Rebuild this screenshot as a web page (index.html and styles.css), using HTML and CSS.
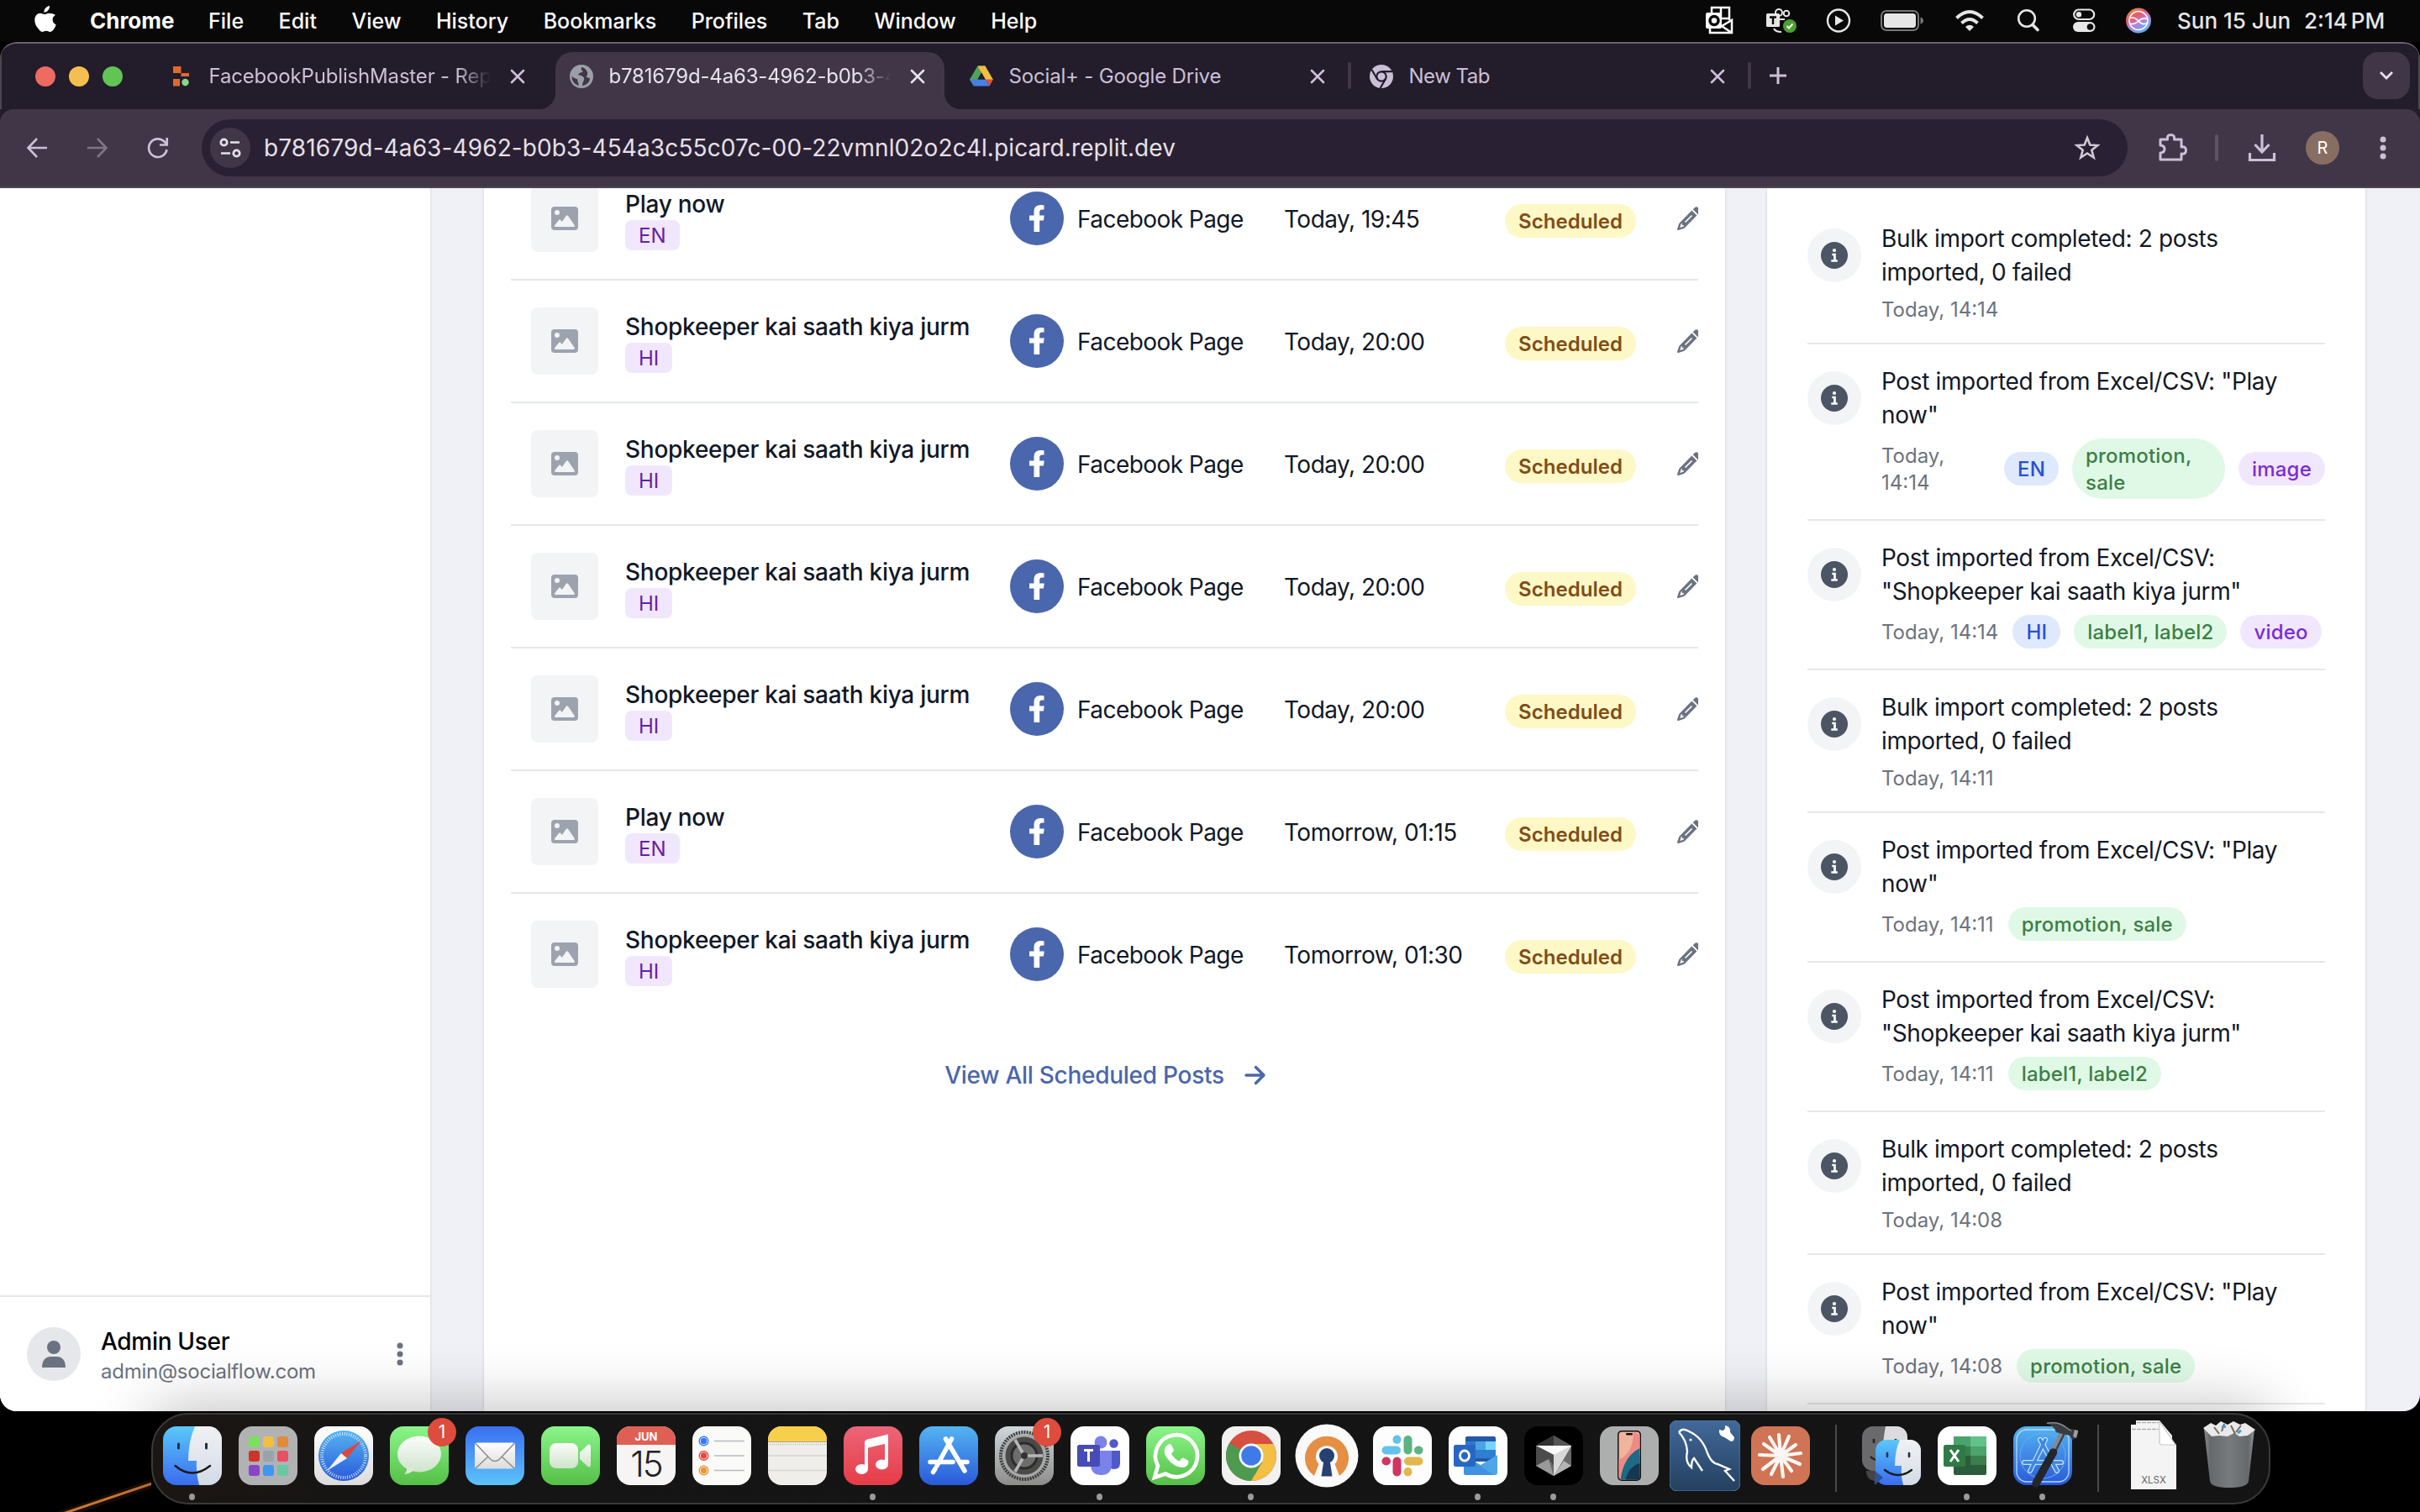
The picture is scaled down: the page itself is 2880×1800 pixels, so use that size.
FILE: index.html
```html
<!DOCTYPE html>
<html lang="en">
<head>
<meta charset="utf-8">
<title>Scheduled posts</title>
<link rel="stylesheet" href="styles.css">
</head>
<body>
<svg class="defs" aria-hidden="true">
  <defs>
    <linearGradient id="g-finder" x1="0" y1="0" x2="0" y2="1"><stop offset="0" stop-color="#5ac8fa"/><stop offset="1" stop-color="#3a6cf0"/></linearGradient>
    <linearGradient id="g-face" x1="0" y1="0" x2="0" y2="1"><stop offset="0" stop-color="#f1f1f4"/><stop offset="1" stop-color="#d3dbe6"/></linearGradient>
    <linearGradient id="g-green" x1="0" y1="0" x2="0" y2="1"><stop offset="0" stop-color="#8bf58a"/><stop offset="1" stop-color="#55bf48"/></linearGradient>
    <linearGradient id="g-mail" x1="0" y1="0" x2="0" y2="1"><stop offset="0" stop-color="#3a6ff0"/><stop offset="1" stop-color="#5cc3fa"/></linearGradient>
    <linearGradient id="g-blue" x1="0" y1="0" x2="0" y2="1"><stop offset="0" stop-color="#54b4f2"/><stop offset="1" stop-color="#2a59d9"/></linearGradient>
    <linearGradient id="g-white" x1="0" y1="0" x2="0" y2="1"><stop offset="0" stop-color="#ffffff"/><stop offset="1" stop-color="#dcdcdc"/></linearGradient>
    <linearGradient id="g-bubble" x1="0" y1="0" x2="0" y2="1"><stop offset="0" stop-color="#fbfdfa"/><stop offset="1" stop-color="#cfe3cb"/></linearGradient>
    <linearGradient id="g-music" x1="0" y1="0" x2="0" y2="1"><stop offset="0" stop-color="#ec6579"/><stop offset="1" stop-color="#e63c46"/></linearGradient>
    <linearGradient id="g-prefs" x1="0" y1="0" x2="0" y2="1"><stop offset="0" stop-color="#cfd8dd"/><stop offset="1" stop-color="#8d8d8b"/></linearGradient>
    <linearGradient id="g-sql" x1="0" y1="0" x2="0" y2="1"><stop offset="0" stop-color="#41699a"/><stop offset="1" stop-color="#24405f"/></linearGradient>
    <linearGradient id="g-trash" x1="0" y1="0" x2="1" y2="0"><stop offset="0" stop-color="#8b8f92"/><stop offset=".12" stop-color="#66696c"/><stop offset=".5" stop-color="#777b7e"/><stop offset=".88" stop-color="#66696c"/><stop offset="1" stop-color="#94989b"/></linearGradient>
    <linearGradient id="g-siri" x1="0" y1="0" x2=".6" y2="1"><stop offset="0" stop-color="#eda63f"/><stop offset=".4" stop-color="#e8596a"/><stop offset=".65" stop-color="#b583dc"/><stop offset="1" stop-color="#57b4f0"/></linearGradient>
  </defs>
  <symbol id="i-close" viewBox="0 0 24 24"><path d="M5 5l14 14M19 5L5 19" stroke="currentColor" stroke-width="2.600" fill="none" stroke-linecap="round"/></symbol>
  <symbol id="i-image" viewBox="0 0 32 28"><path fill="currentColor" fill-rule="evenodd" d="M4 0h24a4 4 0 0 1 4 4v20a4 4 0 0 1-4 4H4a4 4 0 0 1-4-4V4a4 4 0 0 1 4-4zM7 4a3 3 0 1 0 0 6a3 3 0 0 0 0-6zM17.700 11L12.800 18l-1.700-2.100q-1-1.100-2 0L4.200 22q-.8 2 1 2h21.500q1.800-.2 1-2l-7.600-11q-1.200-1.400-2.400 0z"/></symbol>
  <symbol id="i-fb" viewBox="0 0 64 64"><circle cx="32" cy="32" r="32" fill="#4a66ac"/><path fill="#fff" d="M28.500 48V34.500H23V28.500h5.500v-4.500c0-5.200 3-8 7.800-8 2.200 0 4.200.4 4.200.4v5.100h-2.300c-2.300 0-3 1.400-3 3v4h5.600l-.9 6h-4.700V48z"/></symbol>
  <symbol id="i-pencil" viewBox="0 0 28 28"><path fill="#6b7280" d="M18.700 3.300l6 6 2-2c1.300-1.300 1.300-3 0-4.300L25 1.300c-1.300-1.300-3-1.300-4.300 0zM17.400 4.600L3.200 18.900c-.6.600-1.100 1.400-1.300 2.200L.1 26.600c-.2.900.5 1.500 1.300 1.300l5.600-1.600c.9-.3 1.600-.7 2.200-1.300L23.400 10.600zM4.500 20.800l1.300-1v2.500h2.500l-1 1.500-4 1.200z"/><path d="M9.500 18.500l8-8" stroke="#fff" stroke-width="1.700"/></symbol>
  <symbol id="i-info" viewBox="0 0 64 64"><circle cx="32" cy="32" r="32" fill="#f3f4f6"/><circle cx="32" cy="32" r="16" fill="#4b5563"/><circle cx="32" cy="26" r="2.100" fill="#fff"/><path d="M29.300 31h3.200v7.500M28.300 38.500h7.500" stroke="#fff" stroke-width="2.700" fill="none"/></symbol>
  <symbol id="i-dots" viewBox="0 0 8 28"><circle cx="4" cy="4" r="3.500"/><circle cx="4" cy="14" r="3.500"/><circle cx="4" cy="24" r="3.500"/></symbol>
</svg>

<header class="menubar">
  <svg class="apple" viewBox="0 0 26 31"><path fill="#fff" d="M18 0c.3 2.200-.7 4.200-2 5.600-1.300 1.400-3 2.200-4.600 2.100-.2-2 .7-4 1.900-5.300C14.600 1 16.500.1 18 0zM25 10.700c-2.200 1.400-3.400 3.200-3.400 5.600 0 2.700 1.500 5 4.100 6.100-.6 1.900-1.500 3.700-2.700 5.400-1.200 1.700-2.500 3.100-4.400 3.100-1.800 0-2.400-1.100-4.600-1.100s-3 1.100-4.700 1.100c-1.900 0-3.200-1.500-4.400-3.300C1.400 24.100.2 19.700.3 16.500.5 11.800 3.500 8.800 7 8.800c2 0 3.700 1.300 5 1.300 1.200 0 3.100-1.400 5.600-1.400 2.300 0 5.500.9 7.400 2z"/></svg>
  <nav class="menus">
    <b>Chrome</b><span>File</span><span>Edit</span><span>View</span><span>History</span><span>Bookmarks</span><span>Profiles</span><span>Tab</span><span>Window</span><span>Help</span>
  </nav>
  <svg class="status" viewBox="2020 0 550 50">
    <g fill="none" stroke="#fff" stroke-width="2.500"><path d="M2037 16V9h21v15M2048 9v14M2037 22h21M2035 34v5h26V24l-12 7 12 8"/></g>
    <rect x="2030" y="15" width="19" height="19" rx="2" fill="#fff"/><ellipse cx="2040" cy="24.500" rx="5" ry="5" fill="none" stroke="#080808" stroke-width="3.500"/>
    <g fill="none" stroke="#e6e6e6" stroke-width="2"><circle cx="2117" cy="15" r="4"/><circle cx="2126" cy="16" r="3.300"/><path d="M2118 23h6M2111 34q2 4 9 4"/></g>
    <rect x="2102" y="16" width="16" height="16" rx="1.500" fill="#e6e6e6"/><path d="M2106 20.500h8M2110 20v9" stroke="#080808" stroke-width="2.400"/>
    <circle cx="2130" cy="31" r="8" fill="#4c9f2e"/><path d="M2126.500 31l2.500 2.500 4.500-5" fill="none" stroke="#fff" stroke-width="2"/>
    <circle cx="2188" cy="24.500" r="13" fill="none" stroke="#e6e6e6" stroke-width="2.400"/><path fill="#e6e6e6" d="M2184 18.500v12l10-6z"/>
    <rect x="2239" y="13" width="44" height="23" rx="6" fill="none" stroke="#767676" stroke-width="2"/><rect x="2242" y="16" width="38" height="17" rx="3.500" fill="#e6e6e6"/><path d="M2285.500 20.500q3.500 1 3.500 4t-3.500 4z" fill="#767676"/>
    <g fill="none" stroke="#e6e6e6" stroke-width="4"><path d="M2328.500 21.500q15.500-15 31 0M2334.500 27.500q9.500-9 19 0"/></g><path fill="#e6e6e6" d="M2339 32q5-4.500 10 0l-5 5z"/>
    <circle cx="2412" cy="22" r="9.800" fill="none" stroke="#e6e6e6" stroke-width="2.600"/><path d="M2419 29.500l6 6" stroke="#e6e6e6" stroke-width="3.600" stroke-linecap="round"/>
    <rect x="2468.200" y="11.500" width="24" height="11.500" rx="5.700" fill="none" stroke="#e6e6e6" stroke-width="2.200"/><circle cx="2474" cy="17.200" r="3.200" fill="#e6e6e6"/><rect x="2467" y="26" width="26.500" height="12" rx="6" fill="#e6e6e6"/><circle cx="2487.500" cy="32" r="3.800" fill="#080808"/>
    <circle cx="2545" cy="24.500" r="15" fill="url(#g-siri)"/><circle cx="2545" cy="24.500" r="11" fill="none" stroke="#fff" stroke-width="1.600"/><path d="M2534 22q6-3 11 3t11 2M2534 28q6 2 11-3t11-2" fill="none" stroke="#fff" stroke-width="1.500"/>
  </svg>
  <span class="clock"><span>Sun 15 Jun</span><span class="hour">2:14 PM</span></span>
</header>

<section class="window">
  <div class="tabstrip">
    <div class="lights"><i class="red"></i><i class="yellow"></i><i class="green"></i></div>
    <div class="tab">
      <svg class="fav" viewBox="0 0 28 28"><path fill="#e06a2c" d="M4 2h9.500v8H4zM13.500 10H23v4H13.500zM4 17h8v8.500H4z"/><circle cx="18.500" cy="21" r="4.200" fill="#85d98a"/></svg>
      <span class="tab-title faded">FacebookPublishMaster - Replit</span>
      <svg class="x"><use href="#i-close"/></svg>
    </div>
    <div class="tab active">
      <svg class="fav" viewBox="0 0 28 28"><circle cx="14" cy="14" r="14" fill="#9aa0a6"/><path fill="#403648" d="M14 3c-1 3 0 4 2 5-2 2-5 1-6 4 3 1 6 1 7 4s-2 4-2 9c6-1 9-5 9-9l-4-1c0-3 2-3 1-6-1-3-4-6-7-6zM2.500 13c1 3 4 3 6 4s0 3 2 5v3C5 23 2 18 2.500 13z"/></svg>
      <span class="tab-title faded">b781679d-4a63-4962-b0b3-454a</span>
      <svg class="x"><use href="#i-close"/></svg>
    </div>
    <div class="tab">
      <svg class="fav" viewBox="0 0 28 28"><path fill="#4fa35a" d="M9.500 1.500h9L5 25.500 0 17.500z"/><path fill="#f3bd42" d="M9.500 1.500h9L28 18h-9z"/><path fill="#4680ea" d="M5 25.500l4.500-8H19l4.500 8z"/><path fill="#4680ea" d="M0 17.500h10L5 25.500z"/><path fill="#dc5040" d="M19 17.500h9l-4.500 8z"/><path fill="#231c2a" d="M14 9.500l4.700 8H9.400z" opacity=".55"/></svg>
      <span class="tab-title">Social+ - Google Drive</span>
      <svg class="x"><use href="#i-close"/></svg>
    </div>
    <div class="tab lined">
      <svg class="fav" viewBox="0 0 28 28"><circle cx="14" cy="14" r="14" fill="#c9bfd6"/><circle cx="14" cy="14" r="5.700" fill="none" stroke="#231c2a" stroke-width="2.200"/><path d="M14 8.200h13M9 17L2.500 6M19 17l-6.500 11" stroke="#231c2a" stroke-width="2.200"/></svg>
      <span class="tab-title tight">New Tab</span>
      <svg class="x"><use href="#i-close"/></svg>
    </div>
    <div class="newtab lined"><svg width="22" height="22" viewBox="0 0 22 22"><path d="M11 1v20M1 11h20" stroke="#cbc0d8" stroke-width="3"/></svg></div>
    <div class="dropdown"><svg width="18" height="12" viewBox="0 0 18 12"><path d="M2 2l7 7 7-7" stroke="#e6dff0" stroke-width="2.800" fill="none"/></svg></div>
  </div>
  <div class="toolbar">
    <svg class="nav" viewBox="0 0 28 28"><path d="M26 14H4M14 3L3.500 14 14 25" stroke="#cbc0d8" stroke-width="2.600" fill="none"/></svg>
    <svg class="nav" viewBox="0 0 28 28"><path d="M2 14h22M14 3l10.500 11L14 25" stroke="#7d7486" stroke-width="2.600" fill="none"/></svg>
    <svg class="nav" viewBox="0 0 28 28"><path d="M24.500 16A10.800 10.800 0 1 1 21.500 6.500L24.500 9.500M24.700 2v8.500H16" stroke="#cbc0d8" stroke-width="2.700" fill="none"/></svg>
    <div class="omnibox">
      <div class="site"><svg width="28" height="28" viewBox="0 0 28 28"><g fill="none" stroke="#e6e0e9" stroke-width="2.700"><circle cx="6.500" cy="7.500" r="3.700"/><path d="M14 7.500h11M3 20.500h11"/><circle cx="21.500" cy="20.500" r="3.700"/></g></svg></div>
      <span class="url">b781679d-4a63-4962-b0b3-454a3c55c07c-00-22vmnl02o2c4l.picard.replit.dev</span>
      <svg class="star" viewBox="0 0 32 32"><path d="M16 4l3.300 8.500 9 .5-7 5.700 2.400 8.800L16 22.500l-7.700 5 2.400-8.800-7-5.700 9-.5z" fill="none" stroke="#cfc9d2" stroke-width="2.600"/></svg>
    </div>
    <svg class="puzzle" viewBox="0 0 36 36"><path d="M4 8h8.500q-1-5.500 4-5.500t4 5.500H29v9q5.500-1 5.500 4t-5.500 4v7H4v-8q5-.5 5-4.500t-5-4.500z" fill="none" stroke="#cbc0d8" stroke-width="3" stroke-linejoin="round"/></svg>
    <i class="tsep"></i>
    <svg class="download" viewBox="0 0 34 34"><path d="M17 1v20M8.500 13l8.500 9 8.500-9M2.500 23v8.500h29V23" fill="none" stroke="#cbc0d8" stroke-width="3.200"/></svg>
    <span class="profile">R</span>
    <svg class="kebab" viewBox="0 0 8 28"><use href="#i-dots"/></svg>
  </div>

  <div class="page">
    <aside class="sidebar">
      <div class="user">
        <svg class="avatar" viewBox="0 0 64 64"><circle cx="32" cy="32" r="32" fill="#e5e7eb"/><circle cx="32" cy="24" r="8" fill="#6b7280"/><path d="M18 48c0-8 4-13 10-13h8c6 0 10 5 10 13z" fill="#6b7280"/></svg>
        <div class="who"><span class="name">Admin User</span><span class="mail">admin@socialflow.com</span></div>
        <svg class="more" viewBox="0 0 8 28"><use href="#i-dots"/></svg>
      </div>
    </aside>
    <main class="card posts">
      <div class="row"><div class="thumb"><svg><use href="#i-image"/></svg></div><div class="what"><span class="title">Play now</span><span class="lang">EN</span></div><div class="platform"><svg><use href="#i-fb"/></svg><span>Facebook Page</span></div><span class="when">Today, 19:45</span><span class="state">Scheduled</span><svg class="edit"><use href="#i-pencil"/></svg></div>
      <div class="row"><div class="thumb"><svg><use href="#i-image"/></svg></div><div class="what"><span class="title">Shopkeeper kai saath kiya jurm</span><span class="lang">HI</span></div><div class="platform"><svg><use href="#i-fb"/></svg><span>Facebook Page</span></div><span class="when">Today, 20:00</span><span class="state">Scheduled</span><svg class="edit"><use href="#i-pencil"/></svg></div>
      <div class="row"><div class="thumb"><svg><use href="#i-image"/></svg></div><div class="what"><span class="title">Shopkeeper kai saath kiya jurm</span><span class="lang">HI</span></div><div class="platform"><svg><use href="#i-fb"/></svg><span>Facebook Page</span></div><span class="when">Today, 20:00</span><span class="state">Scheduled</span><svg class="edit"><use href="#i-pencil"/></svg></div>
      <div class="row"><div class="thumb"><svg><use href="#i-image"/></svg></div><div class="what"><span class="title">Shopkeeper kai saath kiya jurm</span><span class="lang">HI</span></div><div class="platform"><svg><use href="#i-fb"/></svg><span>Facebook Page</span></div><span class="when">Today, 20:00</span><span class="state">Scheduled</span><svg class="edit"><use href="#i-pencil"/></svg></div>
      <div class="row"><div class="thumb"><svg><use href="#i-image"/></svg></div><div class="what"><span class="title">Shopkeeper kai saath kiya jurm</span><span class="lang">HI</span></div><div class="platform"><svg><use href="#i-fb"/></svg><span>Facebook Page</span></div><span class="when">Today, 20:00</span><span class="state">Scheduled</span><svg class="edit"><use href="#i-pencil"/></svg></div>
      <div class="row"><div class="thumb"><svg><use href="#i-image"/></svg></div><div class="what"><span class="title">Play now</span><span class="lang">EN</span></div><div class="platform"><svg><use href="#i-fb"/></svg><span>Facebook Page</span></div><span class="when">Tomorrow, 01:15</span><span class="state">Scheduled</span><svg class="edit"><use href="#i-pencil"/></svg></div>
      <div class="row"><div class="thumb"><svg><use href="#i-image"/></svg></div><div class="what"><span class="title">Shopkeeper kai saath kiya jurm</span><span class="lang">HI</span></div><div class="platform"><svg><use href="#i-fb"/></svg><span>Facebook Page</span></div><span class="when">Tomorrow, 01:30</span><span class="state">Scheduled</span><svg class="edit"><use href="#i-pencil"/></svg></div>
      <div class="viewall"><span>View All Scheduled Posts</span><svg width="26" height="24" viewBox="0 0 26 24"><path d="M2 12h21M13.500 2.500L23 12l-9.500 9.500" fill="none" stroke="#4a66ac" stroke-width="3.400" stroke-linecap="round" stroke-linejoin="round"/></svg></div>
    </main>
    <section class="card activity">
      <div class="item"><svg><use href="#i-info"/></svg><div><p>Bulk import completed: 2 posts imported, 0 failed</p><div class="meta"><time>Today, 14:14</time></div></div></div>
      <div class="item"><svg><use href="#i-info"/></svg><div><p>Post imported from Excel/CSV: "Play now"</p><div class="meta spread"><time>Today, 14:14</time><span class="tag blue">EN</span><span class="tag lime wrap">promotion, sale</span><span class="tag violet">image</span></div></div></div>
      <div class="item"><svg><use href="#i-info"/></svg><div><p>Post imported from Excel/CSV: "Shopkeeper kai saath kiya jurm"</p><div class="meta"><time>Today, 14:14</time><span class="tag blue">HI</span><span class="tag lime">label1, label2</span><span class="tag violet">video</span></div></div></div>
      <div class="item"><svg><use href="#i-info"/></svg><div><p>Bulk import completed: 2 posts imported, 0 failed</p><div class="meta"><time>Today, 14:11</time></div></div></div>
      <div class="item"><svg><use href="#i-info"/></svg><div><p>Post imported from Excel/CSV: "Play now"</p><div class="meta"><time>Today, 14:11</time><span class="tag lime">promotion, sale</span></div></div></div>
      <div class="item"><svg><use href="#i-info"/></svg><div><p>Post imported from Excel/CSV: "Shopkeeper kai saath kiya jurm"</p><div class="meta"><time>Today, 14:11</time><span class="tag lime">label1, label2</span></div></div></div>
      <div class="item"><svg><use href="#i-info"/></svg><div><p>Bulk import completed: 2 posts imported, 0 failed</p><div class="meta"><time>Today, 14:08</time></div></div></div>
      <div class="item"><svg><use href="#i-info"/></svg><div><p>Post imported from Excel/CSV: "Play now"</p><div class="meta"><time>Today, 14:08</time><span class="tag lime">promotion, sale</span></div></div></div>
    </section>
  </div>
</section>

<footer class="desktop">
  <svg class="streak" viewBox="0 0 180 120"><path d="M60 128L184 85" stroke="#5a2d10" stroke-width="10" opacity=".3"/><path d="M60 127L184 85" stroke="#c87837" stroke-width="3"/></svg>
  <div class="dock">
    <div class="app run"><svg viewBox="0 0 70 70"><rect width="70" height="70" rx="16" fill="url(#g-finder)"/><path d="M38 0h16a16 16 0 0 1 16 16v38a16 16 0 0 1-16 16H43q-4-14-3-29H30Q30 18 38 0z" fill="url(#g-face)"/><path d="M18.500 21v5M51.500 21v5" stroke="#20304a" stroke-width="3" stroke-linecap="round"/><path d="M14.500 47q20 17 41.500 0" stroke="#1a1a1a" stroke-width="2.500" fill="none" stroke-linecap="round"/></svg></div>
    <div class="app"><svg viewBox="0 0 70 70"><rect width="70" height="70" rx="16" fill="#b0b2b3"/><g><rect x="12" y="12" width="13" height="13" rx="3" fill="#7be05a"/><rect x="29" y="12" width="13" height="13" rx="3" fill="#f2bd42"/><rect x="46" y="12" width="13" height="13" rx="3" fill="#e38a39"/><rect x="12" y="29" width="13" height="13" rx="3" fill="#cc3528"/><rect x="29" y="29" width="13" height="13" rx="3" fill="#9aa3a8"/><rect x="46" y="29" width="13" height="13" rx="3" fill="#ea4f62"/><rect x="12" y="46" width="13" height="13" rx="3" fill="#8a44c8"/><rect x="29" y="46" width="13" height="13" rx="3" fill="#3d97f5"/><rect x="46" y="46" width="13" height="13" rx="3" fill="#67c9a2"/></g></svg></div>
    <div class="app"><svg viewBox="0 0 70 70"><rect width="70" height="70" rx="16" fill="url(#g-white)"/><circle cx="35" cy="35" r="30" fill="url(#g-blue)"/><circle cx="35" cy="35" r="26" fill="none" stroke="#cfe4fa" stroke-width="4" stroke-dasharray="1 1.720"/><path fill="#e2453a" d="M56 17L39 38l-7-6z"/><path fill="#f2f2f2" d="M15 53l17-21 7 6z"/></svg></div>
    <div class="app"><svg viewBox="0 0 70 70"><rect width="70" height="70" rx="16" fill="url(#g-green)"/><ellipse cx="35" cy="33" rx="26" ry="21.500" fill="url(#g-bubble)"/><path d="M20 47q1 7-3 10 9-1 12-6z" fill="#dcebd8"/></svg><span class="badge">1</span></div>
    <div class="app"><svg viewBox="0 0 70 70"><rect width="70" height="70" rx="16" fill="url(#g-mail)"/><rect x="11" y="19.500" width="48" height="31" rx="3" fill="url(#g-white)"/><path d="M12 20.500l18 19q5 4 10 0l18-19M12 50l15-14M58 50L43 36" fill="none" stroke="#8e8e8e" stroke-width="1.600"/></svg></div>
    <div class="app"><svg viewBox="0 0 70 70"><rect width="70" height="70" rx="16" fill="url(#g-green)"/><rect x="10" y="20" width="34" height="30" rx="8" fill="url(#g-bubble)"/><path d="M46 31l9-8.500q4-2.500 4 2v21q0 4.500-4 2L46 39z" fill="url(#g-bubble)"/></svg></div>
    <div class="app"><svg viewBox="0 0 70 70"><rect width="70" height="70" rx="16" fill="#f6f5f3"/><path d="M0 22v-6A16 16 0 0 1 16 0h38a16 16 0 0 1 16 16v6z" fill="#df5f54"/></svg><span class="cal"><b>JUN</b><em>15</em></span></div>
    <div class="app"><svg viewBox="0 0 70 70"><rect width="70" height="70" rx="16" fill="#fafaf9"/><path d="M26 17.500h36M26 35h36M26 52.500h36" stroke="#b9bbc0" stroke-width="1.500"/><g fill="none" stroke-width="1.400"><circle cx="13.500" cy="17.500" r="5.300" stroke="#3478f6"/><circle cx="13.500" cy="35" r="5.300" stroke="#e5493f"/><circle cx="13.500" cy="52.500" r="5.300" stroke="#ea9636"/></g><circle cx="13.500" cy="17.500" r="3.700" fill="#3478f6"/><circle cx="13.500" cy="35" r="3.700" fill="#e5493f"/><circle cx="13.500" cy="52.500" r="3.700" fill="#ea9636"/></svg></div>
    <div class="app"><svg viewBox="0 0 70 70"><rect width="70" height="70" rx="16" fill="#efeeea"/><path d="M0 18v-2A16 16 0 0 1 16 0h38a16 16 0 0 1 16 16v2z" fill="#f7cf4a"/><path d="M0 18.500h70" stroke="#a9a28d" stroke-width="1.200"/><path d="M2 21.500h68" stroke="#b5b5b0" stroke-width="1.400" stroke-dasharray="1 1.500"/><path d="M0 35h70M0 52.500h70" stroke="#d5d4d0" stroke-width="1.400"/></svg></div>
    <div class="app run"><svg viewBox="0 0 70 70"><rect width="70" height="70" rx="16" fill="url(#g-music)"/><path d="M27 18l24-6v32M27 50V18" fill="none" stroke="#fff" stroke-width="4"/><path d="M25 17.500l28-6.500v9l-28 6.500z" fill="#fff"/><ellipse cx="21.500" cy="51" rx="7.500" ry="6" fill="#fff"/><ellipse cx="45.500" cy="45.500" rx="7.500" ry="6" fill="#fff"/></svg></div>
    <div class="app"><svg viewBox="0 0 70 70"><rect width="70" height="70" rx="16" fill="url(#g-blue)"/><path d="M38.500 15L21 47M31.500 15L54 53M13 42.500h27M48 42.500h9M19 50.500l-2.500 4" stroke="#fff" stroke-width="5.500" stroke-linecap="round"/></svg></div>
    <div class="app"><svg viewBox="0 0 70 70"><rect width="70" height="70" rx="16" fill="url(#g-prefs)"/><circle cx="35" cy="35" r="28" fill="none" stroke="#3b3b3b" stroke-width="4" stroke-dasharray="2 1.200"/><circle cx="35" cy="35" r="24" fill="#4a4a49" stroke="#a7a9a9" stroke-width="3"/><circle cx="35" cy="35" r="15" fill="#6c6d6c" stroke="#2c2c2c" stroke-width="3"/><path d="M35 35h22M35 35L24 16M35 35L24 54" stroke="#b6b8b8" stroke-width="3.500"/><circle cx="35" cy="35" r="4" fill="#333"/></svg><span class="badge">1</span></div>
    <div class="app run"><svg viewBox="0 0 70 70"><rect width="70" height="70" rx="16" fill="#fff"/><circle cx="36" cy="19" r="7.500" fill="#7b83eb"/><circle cx="51.500" cy="20.500" r="5.200" fill="#5059c9"/><path d="M46 29h13v15q0 7-7 7-6 0-6-6z" fill="#5059c9"/><path d="M24 29h25v16q0 13-12.500 13T24 45z" fill="#7b83eb"/><rect x="8" y="22" width="27" height="26" rx="2.500" fill="#464bb5"/><path d="M16 28.500h11M21.500 28v14" stroke="#fff" stroke-width="3"/></svg></div>
    <div class="app"><svg viewBox="0 0 70 70"><rect width="70" height="70" rx="16" fill="url(#g-green)"/><path d="M10 61l4-14a25 25 0 1 1 9 9.500z" fill="none" stroke="#fff" stroke-width="4.600"/><path d="M26 22q2-2 4 0l3 6q0 2-3 4.500 3 6 9.500 9 3-4 4.500-4l6.500 3.500q0 8-8 8-8-.5-15-8T22 28q.5-4 4-6z" fill="#fff"/></svg></div>
    <div class="app run"><svg viewBox="0 0 70 70"><rect width="70" height="70" rx="16" fill="#f1f1f0"/><circle cx="35" cy="35" r="30" fill="#d64f41"/><path d="M35 35L9 20a30 30 0 0 0 26 45l13-22z" fill="#4d9a50"/><path d="M35 21h26.500A30 30 0 0 1 35 65l13-22z" fill="#f3bf45"/><circle cx="35" cy="35" r="14.500" fill="#fff"/><circle cx="35" cy="35" r="11.800" fill="#3f7ae8"/></svg></div>
    <div class="app"><svg class="big" viewBox="-3 -3 76 76"><circle cx="35" cy="35" r="37.500" fill="#fafafa"/><path d="M20 59a26 26 0 1 1 30 0l-5.500-14a13 13 0 1 0-19 0z" fill="#e48f44"/><circle cx="35" cy="35" r="9" fill="#27406f"/><path d="M31.500 40h7l3 19.500h-13z" fill="#27406f"/></svg></div>
    <div class="app"><svg viewBox="0 0 70 70"><rect width="70" height="70" rx="16" fill="#fdfdfd"/><g stroke-width="10" stroke-linecap="round"><path d="M15.500 28.500h12.500" stroke="#64c3ec"/><path d="M28.500 15.500v.5" stroke="#64c3ec"/><path d="M41.500 16v12.500" stroke="#5bb381"/><path d="M54 28.500h.5" stroke="#5bb381"/><path d="M42 41.500h12.500" stroke="#e3b74c"/><path d="M41.500 54v.5" stroke="#e3b74c"/><path d="M28.500 41.500v13" stroke="#cf3660"/><path d="M15.500 41.500h.5" stroke="#cf3660"/></g></svg></div>
    <div class="app run"><svg viewBox="0 0 70 70"><rect width="70" height="70" rx="16" fill="#fff"/><rect x="20" y="12" width="36" height="30" rx="2" fill="#2458a8"/><path d="M20 18h12v10H20z" fill="#3277c8"/><path d="M32 18h12v10H32z" fill="#4ba3e6"/><path d="M44 18h12v10H44z" fill="#76d4fb"/><path d="M20 28h36v10H20z" fill="#2f7fd1"/><path d="M18 34l20 12 20-12v21q0 3-3 3H21q-3 0-3-3z" fill="#4ea6e8"/><path d="M18 34l36 24H21q-3 0-3-3z" fill="#3f92df"/><rect x="6" y="22" width="26" height="26" rx="2.500" fill="#2767c4"/><ellipse cx="19" cy="35" rx="5.500" ry="6" fill="none" stroke="#fff" stroke-width="2.800"/></svg></div>
    <div class="app run"><svg viewBox="0 0 70 70"><rect width="70" height="70" rx="16" fill="#000"/><path d="M35 11L14 23v24l21 12 21-12V23z" fill="#6a6a6a"/><path d="M35 11L14 23h42z" fill="#555"/><path d="M35 11v12H14z" fill="#333"/><path d="M14 23h42L35 59V34z" fill="#fafafa"/><path d="M56 23L35 59V34z" fill="#d8d8d8"/><path d="M14 23l21 11v13l-6-8-15 8z" fill="#4c4c4c"/><path d="M14 47l15-8 6 20z" fill="#9a9a9a"/><path d="M56 47l-9-6-12 18z" fill="#b5b5b5"/></svg></div>
    <div class="app"><svg viewBox="0 0 70 70"><rect width="70" height="70" rx="16" fill="#adafaf"/><rect x="21" y="5" width="28" height="60" rx="5" fill="#111"/><rect x="22.500" y="6.500" width="25" height="57" rx="4" fill="#f0b39b"/><path d="M47.500 10v24Q30 40 26 63.500q-3.500-.5-3.500-4V40Q40 32 40 6.500z" fill="#ee8a86"/><path d="M47.500 26v33.500q0 4-4 4h-19Q28 36 47.500 26z" fill="#1c6a86"/><path d="M47.500 44v15.500q0 4-4 4h-13q4-16 17-19.500z" fill="#153850"/><rect x="31" y="8" width="8" height="2.600" rx="1.300" fill="#111"/></svg></div>
    <div class="app"><svg class="tall" viewBox="0 0 84 84"><rect width="84" height="84" rx="9" fill="url(#g-sql)" stroke="#5580ab" stroke-width="1"/><path d="M11 14q4-6 12-1 16 7 22 26 5 12 12 13l14 6-5 2 11 12M11 14q9 9 10 23-3 13 5 19 0-9 3-11l10 15" fill="none" stroke="#fff" stroke-width="2.400"/><circle cx="25" cy="23" r="1.600" fill="#fff"/><path d="M66 6q1 5-3 6l-4-1q-1 7 6 9l8 5q4 0 4-5l-5-6q1-7-6-8z" fill="#fff"/></svg></div>
    <div class="app"><svg viewBox="0 0 70 70"><rect width="70" height="70" rx="16" fill="#cf7455"/><path d="M35 35L33 10M35 35l10-23M35 35l18-13M35 35l24-3M35 35l23 10M35 35l13 18M35 35l3 25M35 35L24 57M35 35L14 51M35 35l-25-1M35 35L15 21M35 35L22 13" stroke="#fbf6f3" stroke-width="4.200" stroke-linecap="round"/></svg></div>
    <i class="dsep"></i>
    <div class="app"><svg viewBox="0 0 70 70"><rect width="54" height="53" rx="13" fill="#6a6a6c"/><path d="M28 0h13a13 13 0 0 1 13 13v30H24Q24 20 28 0z" fill="#dcdcde"/><path d="M14 15v5M40 15v5" stroke="#222" stroke-width="2.500"/><path d="M10 36q4 4 10 5" stroke="#222" stroke-width="2.300" fill="none"/><path d="M5 53h14v12Q5 66 5 53z" fill="#444"/><rect x="16" y="16" width="54" height="54" rx="13" fill="url(#g-finder)"/><path d="M45 16h12a13 13 0 0 1 13 13v28a13 13 0 0 1-13 13h-8q-3-11-2-23h-8q0-18 6-31z" fill="url(#g-face)"/><path d="M15 53l10 8-10 9z" fill="#33518a"/><path d="M30 32v4M56 32v4" stroke="#20304a" stroke-width="2.600" stroke-linecap="round"/><path d="M27 52q16 12 32 0" stroke="#1a1a1a" stroke-width="2.300" fill="none" stroke-linecap="round"/></svg></div>
    <div class="app run"><svg viewBox="0 0 70 70"><rect width="70" height="70" rx="16" fill="#fff"/><rect x="19" y="12" width="39" height="46" rx="2" fill="#2b5c3b"/><path d="M19 12h20v12H19z" fill="#4ca36c"/><path d="M39 12h19v12H39z" fill="#62c28c"/><path d="M19 24h20v11H19z" fill="#3a7f4c"/><path d="M39 24h19v11H39z" fill="#4ca36c"/><path d="M39 35h19v11H39z" fill="#3a7f4c"/><rect x="7" y="22" width="26" height="26" rx="2.500" fill="#2f7a47"/><path d="M15 28l10 14M25 28L15 42" stroke="#fff" stroke-width="3"/></svg></div>
    <div class="app run"><svg class="tall" viewBox="-7 -7 84 84"><rect width="70" height="70" rx="16" fill="url(#g-blue)"/><rect x="4" y="4" width="62" height="62" rx="12" fill="none" stroke="#b5dcfa" stroke-width="1.300"/><circle cx="35" cy="35" r="27" fill="none" stroke="#6aacee" stroke-width="1"/><g stroke-linecap="round"><path d="M38 16L20 53M32 16l20 37M13 43h44" fill="none" stroke="#c4e3fb" stroke-width="6"/><path d="M38 16L20 53M32 16l20 37M13 43h44" fill="none" stroke="#3c88e4" stroke-width="3.600"/></g><path d="M60 5L47 31" stroke="#85888f" stroke-width="6.500"/><path d="M62 6L49 32" stroke="#3f4148" stroke-width="2.500"/><path d="M47.500 31L27 68" stroke="#24262d" stroke-width="9.500" stroke-linecap="round"/><path d="M39-4q14-4 25 5 4 3 6 2l3 1 4 1-2 9-5 2-3-5-4-1-5-1-7-2q-2-7-12-11z" fill="#3a3c42"/><path d="M40-3.500q13-3 23 5l6 4" fill="none" stroke="#85888f" stroke-width="1.500"/><path d="M73 4l4.500 1-2.500 9-4-2z" fill="#9a9da3"/></svg></div>
    <i class="dsep"></i>
    <div class="app"><svg class="tall" viewBox="0 0 84 84"><path d="M15 5h6V0h28l15 18v7l5 4v53H15z" fill="#f4f4f4"/><path d="M49 1l19 28H52q-3 0-3-3z" fill="#fff" stroke="#c9c9c9" stroke-width="1.200"/><path d="M22 2.500h26M16 10.500h32" stroke="#b2b2b2" stroke-width="1.600" stroke-dasharray="5 1"/></svg><span class="ext">XLSX</span></div>
    <div class="app"><svg class="tall" viewBox="0 0 84 84"><path d="M12 10h60l-7 62q-1 8-23 8t-23-8z" fill="url(#g-trash)"/><path d="M11 9L20 3l6 3 6-5 8 4 7-4 8 4 6-2 12 8-9 7-10 1-6-4-8 4-10-1-9 1z" fill="#e9e9e9"/><path d="M24 8l6 8M36 4l-3 9M44 6l5 10M56 6l-6 8" stroke="#7a6a5a" stroke-width="2"/><path d="M33 8l5-1M52 15l4-3" stroke="#4a9ad0" stroke-width="3"/></svg></div>
  </div>
</footer>
</body>
</html>
```
FILE: styles.css
```css
* { box-sizing: border-box; }
html, body { margin: 0; }
body {
  width: 2880px; height: 1800px; overflow: hidden; background: #000;
  font-family: Inter, "Liberation Sans", sans-serif;
  display: flex; flex-direction: column;
}
svg { display: block; flex: none; }
p { margin: 0; }
.defs { position: absolute; width: 0; height: 0; }

/* menu bar */
.menubar { height: 50px; flex: none; display: flex; align-items: center; background: #080808; color: #fff; font-size: 25px; padding-bottom: 2px; }
.apple { width: 26px; height: 31px; margin-left: 41px; margin-top: -4px; }
.menus { display: flex; align-items: baseline; gap: 41.500px; margin-left: 40px; font-weight: 500; }
.menus b { font-weight: 700; font-size: 26px; margin-right: -1px; }
.status { width: 550px; height: 50px; margin-left: auto; margin-bottom: -2px; }
.clock { width: 310px; padding-left: 21px; display: flex; gap: 16px; font-size: 26px; font-weight: 500; color: #e6e6e6; white-space: pre; }
.hour { word-spacing: -3px; }

/* browser window */
.window { height: 1630px; flex: none; display: flex; flex-direction: column; background: #231c2a; border-radius: 20px; overflow: hidden; border-top: 2px solid #68626d; }
.tabstrip { height: 78px; flex: none; display: flex; align-items: stretch; padding: 10px 12px 0 0; box-shadow: inset 2px 0 #4c4652, inset -2px 0 #4c4652; }
.lights { width: 179px; padding: 17px 0 0 42px; display: flex; gap: 16px; }
.lights i { width: 24px; height: 24px; border-radius: 50%; }
.red { background: #ed6b60; }
.yellow { background: #f5bf4f; }
.green { background: #61c555; }
.tab { width: 476px; position: relative; display: flex; align-items: center; padding: 0 0 10px 23px; color: #cbc0d8; font-size: 24px; }
.fav { width: 28px; height: 28px; }
.tab-title { width: 335px; margin: 0 20px 0 18.500px; overflow: hidden; white-space: nowrap; line-height: 32px; letter-spacing: -.17px; }
.faded { -webkit-mask-image: linear-gradient(90deg, #000 88%, transparent 100%); mask-image: linear-gradient(90deg, #000 88%, transparent 100%); }
.tight { letter-spacing: -.5px; }
.x { width: 24px; height: 24px; }
.active { color: #e8e2ec; }
.active > * { position: relative; }
.active::before { content: ""; position: absolute; inset: 0 7px 0 6px; background: #403648; border-radius: 20px 20px 0 0; }
.active::after { content: ""; position: absolute; left: -14px; right: -13px; bottom: 0; height: 20px;
  background: radial-gradient(circle at 0 0, transparent 20px, #403648 20.500px) left / 20px 20px no-repeat, radial-gradient(circle at 100% 0, transparent 20px, #403648 20.500px) right / 20px 20px no-repeat; }
.lined::after { content: ""; position: absolute; left: -3px; top: 12px; width: 4px; height: 32px; border-radius: 2px; background: #403648; }
.newtab { position: relative; padding: 17px 0 0 22px; }
.dropdown { width: 56px; height: 56px; margin-left: auto; border-radius: 18px; background: #403648; display: grid; place-items: center; }
.toolbar { height: 94px; flex: none; display: flex; align-items: center; background: #403648; border-radius: 16px 16px 0 0; padding: 0 0 0 30px; border-bottom: 2px solid #4a474d; }
.nav { width: 28px; height: 28px; margin-right: 44px; }
.nav + .nav + .nav { margin-right: 38px; }
.omnibox { width: 2292px; height: 68px; border-radius: 34px; background: #2a2033; display: flex; align-items: center; padding-left: 10px; }
.site { width: 48px; height: 48px; border-radius: 50%; background: #403648; display: grid; place-items: center; }
.url { margin-left: 16px; color: #e6e0e9; font-size: 28px; line-height: 36px; white-space: nowrap; letter-spacing: .11px; }
.star { width: 32px; height: 32px; margin: 0 32px 0 auto; }
.puzzle { width: 36px; height: 36px; margin-left: 35px; }
.tsep { width: 4px; height: 32px; border-radius: 2px; background: #5c5265; margin-left: 33px; }
.download { width: 34px; height: 34px; margin-left: 35px; }
.profile { width: 40px; height: 40px; margin-left: 35px; border-radius: 50%; background: #886d62; color: #fff; font-size: 20px; line-height: 40px; text-align: center; }
.kebab { width: 8px; height: 28px; margin-left: 48px; fill: #cbc0d8; }

/* web page */
.page { height: 1456px; flex: none; display: flex; align-items: stretch; background: #f0f1f6; color: #111827; font-size: 28px; overflow: hidden; }
.sidebar { width: 512px; background: #fff; display: flex; flex-direction: column; justify-content: flex-end; box-shadow: 1px 0 2px rgba(0,0,0,.08); }
.user { height: 138px; border-top: 2px solid #e5e7eb; display: flex; align-items: center; padding-left: 32px; color: #000; }
.avatar { width: 64px; height: 64px; }
.who { display: flex; flex-direction: column; margin-left: 24px; padding-top: 1px; }
.name { font-weight: 500; line-height: 40px; letter-spacing: -.3px; }
.mail { font-size: 24px; line-height: 32px; color: #6b7280; letter-spacing: -.25px; }
.more { width: 8px; height: 28px; margin: 0 32px 0 auto; fill: #6b7280; }
.card { background: #fff; box-shadow: 0 0 3px rgba(0,0,0,.16); }
.posts { width: 1477px; margin-left: 64px; padding: 0 32px; }
.row { width: 1413px; height: 146px; padding-left: 24px; border-bottom: 2px solid #e5e7eb; display: grid; grid-template-columns: 112px 458px 326px 263px 205px 25px; align-items: center; overflow: hidden; }
.row:first-child { margin-top: -36px; }
.row:nth-child(7) { border-bottom-color: transparent; }
.thumb { width: 80px; height: 80px; border-radius: 8px; background: #f3f4f6; color: #9ca3af; display: grid; place-items: center; }
.thumb svg { width: 32px; height: 28px; }
.what { display: flex; flex-direction: column; align-items: flex-start; }
.title { font-weight: 500; line-height: 38px; padding-top: 2px; white-space: nowrap; letter-spacing: -.26px; }
.lang { height: 36px; padding: 3px 16px 1px; border-radius: 8px; background: #f1e7fd; color: #6621a5; font-size: 24px; line-height: 32px; }
.platform { display: flex; align-items: center; gap: 16px; letter-spacing: -.56px; }
.platform span { padding-top: 1px; }
.platform svg { width: 64px; height: 64px; }
.when { letter-spacing: -.52px; padding-top: 1px; }
.state { justify-self: start; margin-top: 6px; padding: 5px 16px 3px; border-radius: 20px; background: #fdf8c6; color: #804d18; font-size: 24px; font-weight: 600; line-height: 32px; letter-spacing: .05px; }
.edit { width: 28px; height: 28px; }
.viewall { display: flex; justify-content: center; align-items: center; gap: 24px; height: 40px; margin: 50px 0 0 0; padding-left: 2px; color: #4a66ac; font-weight: 500; letter-spacing: -.27px; }
.activity { width: 712px; margin-left: 50px; padding: 16px 48px 0; }
.item { display: flex; padding: 24px 0; border-bottom: 2px solid #e5e7eb; }
.item > svg { width: 64px; height: 64px; margin-top: 8px; }
.item > div { flex: 1; margin-left: 24px; }
.item p { line-height: 40px; letter-spacing: -.36px; }
.meta { display: flex; align-items: center; margin-top: 8px; gap: 16px; font-size: 24px; line-height: 32px; white-space: nowrap; }
.meta time { color: #6b7280; margin-right: 1px; position: relative; top: 1px; }
.tag { padding: 5px 16px 3px; border-radius: 36px; font-weight: 500; letter-spacing: .2px; }
.blue { background: #dee9fc; color: #2a4fd4; }
.lime { background: #e0f9e7; color: #3c7f45; }
.violet { background: #f1e7fd; color: #7a2cd6; }
.spread time { width: 129px; white-space: normal; padding-right: 40px; }
.wrap { width: 182px; white-space: normal; }

/* dock */
.desktop { height: 120px; position: relative; display: flex; }
.streak { width: 180px; height: 120px; }
.dock { position: relative; width: 2522px; flex: none; height: 109px; margin-top: 2px; border: 2px solid #3b3a3a; border-radius: 44px; background: linear-gradient(90deg, #1c1613, #151515 12%, #141414); box-shadow: 0 0 70px 10px rgba(0,0,0,.24); display: flex; padding-left: 2px; }
.app { width: 90px; height: 105px; flex: none; position: relative; display: flex; justify-content: center; padding-top: 14px; }
.app svg { width: 70px; height: 70px; }
.app svg.big { width: 76px; height: 76px; margin-top: -3px; }
.app svg.tall { width: 84px; height: 84px; margin-top: -7px; }
.run::after { content: ""; position: absolute; left: 41px; top: 94px; width: 7px; height: 8px; border-radius: 50%; background: #9a9a9a; }
.badge { position: absolute; right: 1px; top: 4px; width: 34px; height: 34px; border-radius: 50%; background: #dd4c3c; color: #fff; font-size: 21px; line-height: 34px; text-align: center; }
.cal { position: absolute; inset: 14px 10px auto; text-align: center; }
.cal b { display: block; font-size: 13px; line-height: 24px; color: #fff; }
.cal em { display: block; font-style: normal; font-size: 42px; font-weight: 300; line-height: 42px; color: #222; letter-spacing: -2px; }
.ext { position: absolute; left: 0; right: 0; top: 71px; text-align: center; font-size: 11.500px; line-height: 14px; color: #666; }
.dsep { width: 2px; flex: none; height: 80px; margin: 12px 20px 0 20px; background: #4a4a4a; }
```
